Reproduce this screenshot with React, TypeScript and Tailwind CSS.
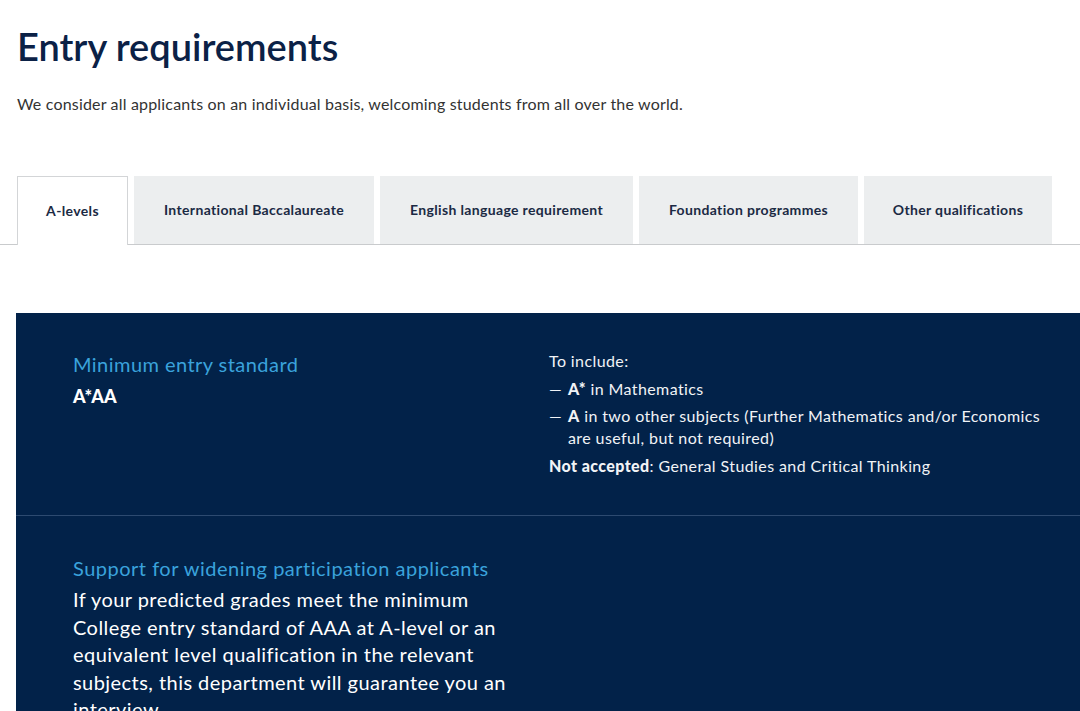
import React from 'react';

const tabs = [
  { label: 'A-levels', w: 'w-[111px]' },
  { label: 'International Baccalaureate', w: 'w-[240px]' },
  { label: 'English language requirement', w: 'w-[253px]' },
  { label: 'Foundation programmes', w: 'w-[219px]' },
  { label: 'Other qualifications', w: 'w-[188px]' },
];

const App: React.FC = () => {
  return (
    <div className="min-h-[711px] w-[1080px] overflow-hidden bg-white font-['Lato','Noto_Sans',sans-serif]">
      <div className="px-[17px] pt-[24px]">
        <h1 className="text-[38px] leading-[44px] font-semibold tracking-[0px] text-[#0b2146]">Entry requirements</h1>
        <p className="mt-[25px] text-[16px] leading-[22px] tracking-[0.18px] text-[#333]">
          We consider all applicants on an individual basis, welcoming students from all over the world.
        </p>
      </div>

      {/* tab strip */}
      <div className="mt-[61px] flex items-end gap-[6px] border-b border-[#c9cbcd] pl-[17px]">
        {tabs.map((t, i) =>
          i === 0 ? (
            <div
              key={t.label}
              className={`${t.w} -mb-px flex h-[69px] items-center justify-center border border-b-0 border-[#d3d5d7] bg-white pb-[2px] text-[14px] font-bold tracking-[0.35px] text-[#1b2a44]`}
            >
              {t.label}
            </div>
          ) : (
            <div
              key={t.label}
              className={`${t.w} flex h-[68px] items-center justify-center bg-[#eceeef] pb-[2px] text-[14px] font-bold tracking-[0.35px] text-[#1b2a44]`}
            >
              {t.label}
            </div>
          )
        )}
      </div>

      {/* panel */}
      <div className="ml-[16px] mt-[68px] bg-[#022249] text-white">
        <div className="grid min-h-[203px] grid-cols-[476px_1fr] border-b border-[#2d4a70] pb-[38px] pl-[57px] pt-[37px]">
          <div>
            <h3 className="text-[20px] leading-[28px] tracking-[0.45px] text-[#3aa3dc]">Minimum entry standard</h3>
            <p className="mt-[6px] text-[18px] leading-[24px] font-black">A*AA</p>
          </div>
          <div className="pr-[30px] text-[16px] leading-[22px] tracking-[0.4px] text-[#f1f3f6]">
            <p>To include:</p>
            <ul className="mt-[6px] space-y-[5px]">
              <li className="flex">
                <span className="w-[19px] shrink-0">—</span>
                <span>
                  <b className="font-black">A*</b> in Mathematics
                </span>
              </li>
              <li className="flex">
                <span className="w-[19px] shrink-0">—</span>
                <span>
                  <b className="font-black">A</b> in two other subjects (Further Mathematics and/or Economics are useful, but not required)
                </span>
              </li>
            </ul>
            <p className="mt-[6px]">
              <b className="font-black">Not accepted</b>: General Studies and Critical Thinking
            </p>
          </div>
        </div>
        <div className="pb-[30px] pl-[57px] pt-[38px]">
          <h3 className="text-[20px] leading-[28px] tracking-[0.5px] text-[#3aa3dc]">Support for widening participation applicants</h3>
          <p className="mt-[4px] w-[450px] text-[20px] leading-[27.5px] tracking-[0.45px]">
            If your predicted grades meet the minimum College entry standard of AAA at A-level or an equivalent level qualification in the relevant subjects, this department will guarantee you an interview.
          </p>
        </div>
      </div>
    </div>
  );
};

export default App;
